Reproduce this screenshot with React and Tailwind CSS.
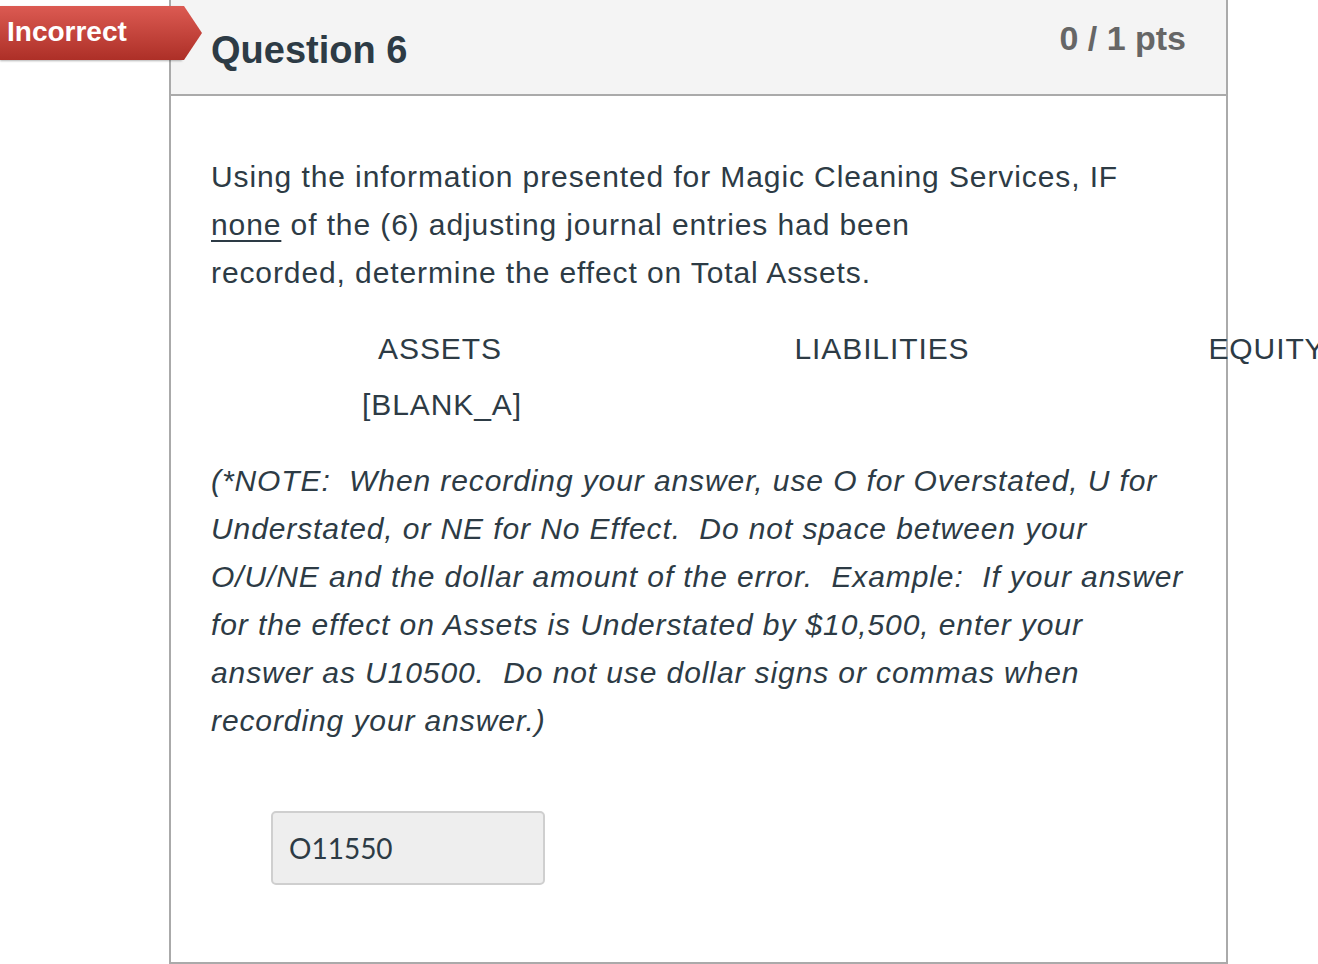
export default function App() {
  const note = [
    "(*NOTE:  When recording your answer, use O for Overstated, U for",
    "Understated, or NE for No Effect.  Do not space between your",
    "O/U/NE and the dollar amount of the error.  Example:  If your answer",
    "for the effect on Assets is Understated by $10,500, enter your",
    "answer as U10500.  Do not use dollar signs or commas when",
    "recording your answer.)",
  ];

  return (
    <div className="relative h-[964px] w-[1318px] overflow-hidden bg-white font-['Liberation_Sans',Arial,sans-serif] text-[#2d3b45]">
      {/* incorrect ribbon */}
      <div className="absolute left-0 top-[6px] z-10 flex h-[54px] items-center">
        <div className="flex h-full w-[182px] items-center bg-gradient-to-b from-[#dc5a52] to-[#ad2f27] pl-[7px] shadow-[0_1px_2px_rgba(0,0,0,0.3)]">
          <span className="-mt-[2px] text-[28px] font-bold text-white">Incorrect</span>
        </div>
        <svg width="20" height="54" viewBox="0 0 20 54" className="block">
          <defs>
            <linearGradient id="rib" x1="0" y1="0" x2="0" y2="1">
              <stop offset="0" stopColor="#dc5a52" />
              <stop offset="1" stopColor="#ad2f27" />
            </linearGradient>
          </defs>
          <polygon points="0,0 2,0 20,27 2,54 0,54" fill="url(#rib)" />
        </svg>
      </div>

      <div className="ml-[169px] flex h-[964px] w-[1059px] flex-col border-2 border-t-0 border-[#aaaaaa]">
        <div className="flex h-[96px] shrink-0 justify-between border-b-2 border-[#aaaaaa] bg-[#f4f4f4] pl-10 pr-[40px]">
          <h2 className="mt-[26px] text-[38px] font-bold leading-[48px]">Question 6</h2>
          <div className="mt-[14px] text-[34px] font-bold leading-[48px] text-[#666666]">0 / 1 pts</div>
        </div>

        <div className="pl-10 pt-[57px] tracking-[0.9px]">
          <p className="text-[30px] leading-[48px]">
            Using the information presented for Magic Cleaning Services, IF
            <br />
            <span className="underline decoration-[1.5px] underline-offset-[5px]">none</span> of the (6) adjusting journal entries had been
            <br />
            recorded, determine the effect on Total Assets.
          </p>

          <div className="mt-[28px] grid w-[1228px] grid-cols-[458px_426px_344px] text-center text-[30px] leading-[48px]">
            <div>ASSETS</div>
            <div>LIABILITIES</div>
            <div>EQUITY</div>
          </div>
          <div className="mt-[8px] w-[462px] text-center text-[30px] leading-[48px]">[BLANK_A]</div>

          <div className="mt-[28px] text-[30px] italic leading-[48px]">
            {note.map((line) => (
              <div key={line} className="whitespace-pre">{line}</div>
            ))}
          </div>

          <div className="ml-[60px] mt-[66px] flex h-[74px] w-[274px] items-center rounded-[5px] border-2 border-[#cfcfcf] bg-[#eeeeee] pl-[16px] font-['Lato',sans-serif] text-[28px] tracking-normal">
            O11550
          </div>
        </div>
      </div>
    </div>
  );
}
